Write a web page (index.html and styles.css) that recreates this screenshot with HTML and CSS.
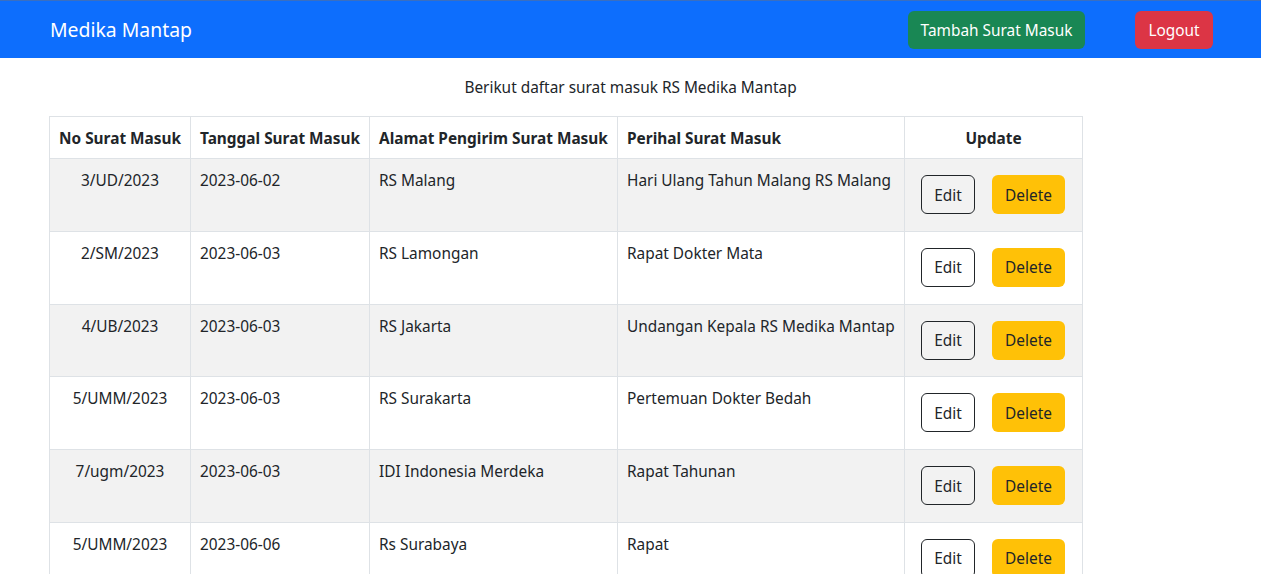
FILE: index.html
```html
<!DOCTYPE html>
<html lang="id">
<head>
<meta charset="utf-8">
<title>Surat Masuk</title>
<link rel="stylesheet" href="styles.css">
</head>
<body>
<nav class="navbar">
  <div class="brand">Medika Mantap</div>
  <div class="nav-actions">
    <button class="btn btn-success">Tambah Surat Masuk</button>
    <button class="btn btn-danger">Logout</button>
  </div>
</nav>
<main class="content">
  <p class="caption">Berikut daftar surat masuk RS Medika Mantap</p>
  <table class="table">
    <colgroup>
      <col class="c1"><col class="c2"><col class="c3"><col class="c4"><col class="c5">
    </colgroup>
    <thead>
      <tr>
        <th class="center">No Surat Masuk</th>
        <th>Tanggal Surat Masuk</th>
        <th>Alamat Pengirim Surat Masuk</th>
        <th>Perihal Surat Masuk</th>
        <th class="center">Update</th>
      </tr>
    </thead>
    <tbody>
      <tr class="odd">
        <td class="center">3/UD/2023</td><td>2023-06-02</td><td>RS Malang</td><td>Hari Ulang Tahun Malang RS Malang</td>
        <td class="actions"><button class="btn btn-edit">Edit</button><button class="btn btn-delete">Delete</button></td>
      </tr>
      <tr>
        <td class="center">2/SM/2023</td><td>2023-06-03</td><td>RS Lamongan</td><td>Rapat Dokter Mata</td>
        <td class="actions"><button class="btn btn-edit">Edit</button><button class="btn btn-delete">Delete</button></td>
      </tr>
      <tr class="odd">
        <td class="center">4/UB/2023</td><td>2023-06-03</td><td>RS Jakarta</td><td>Undangan Kepala RS Medika Mantap</td>
        <td class="actions"><button class="btn btn-edit">Edit</button><button class="btn btn-delete">Delete</button></td>
      </tr>
      <tr>
        <td class="center">5/UMM/2023</td><td>2023-06-03</td><td>RS Surakarta</td><td>Pertemuan Dokter Bedah</td>
        <td class="actions"><button class="btn btn-edit">Edit</button><button class="btn btn-delete">Delete</button></td>
      </tr>
      <tr class="odd">
        <td class="center">7/ugm/2023</td><td>2023-06-03</td><td>IDI Indonesia Merdeka</td><td>Rapat Tahunan</td>
        <td class="actions"><button class="btn btn-edit">Edit</button><button class="btn btn-delete">Delete</button></td>
      </tr>
      <tr>
        <td class="center">5/UMM/2023</td><td>2023-06-06</td><td>Rs Surabaya</td><td>Rapat</td>
        <td class="actions"><button class="btn btn-edit">Edit</button><button class="btn btn-delete">Delete</button></td>
      </tr>
    </tbody>
  </table>
</main>
</body>
</html>
```
FILE: styles.css
```css
* { box-sizing: border-box; }
body {
  margin: 0;
  font-family: "Noto Sans", "Open Sans", sans-serif;
  font-size: 15.4px;
  line-height: 24px;
  color: #212529;
  background: #fff;
}
.navbar {
  height: 58px;
  background: #0d6efd;
  border-top: 1px solid #3a6fc0;
  display: flex;
  align-items: center;
  justify-content: space-between;
  padding: 0 48px 0 50px;
}
.brand {
  color: #fff;
  font-size: 19.4px;
  line-height: 28px;
  margin-top: 1px;
}
.nav-actions {
  display: flex;
  gap: 50px;
}
.btn {
  font-family: inherit;
  font-size: 15.4px;
  line-height: 24px;
  height: 38px;
  border-radius: 6px;
  border: 1px solid transparent;
  padding: 7px 0 5px;
  text-align: center;
  cursor: pointer;
}
.btn-success { background: #198754; color: #fff; width: 177px; }
.btn-danger { background: #dc3545; color: #fff; width: 78px; }
.content { padding: 0 0 0 49px; }
.caption {
  margin: 18px 0 16px -49px;
  text-align: center;
  line-height: 24px;
}
.table {
  border-collapse: collapse;
  table-layout: fixed;
  width: 1033px;
}
.c1 { width: 141px; }
.c2 { width: 179px; }
.c3 { width: 248px; }
.c4 { width: 287px; }
.c5 { width: 178px; }
.table th, .table td {
  border: 1px solid #dee2e6;
  padding: 8px 9px;
  text-align: left;
  vertical-align: top;
  white-space: nowrap;
}
.table th {
  font-weight: 700;
  height: 42px;
  vertical-align: middle;
  padding-top: 10px;
  padding-bottom: 7px;
}
.table td {
  height: 72.8px;
  padding-top: 10px;
}
.table .center { text-align: center; }
.odd td { background: #f2f2f2; }
.table td.actions {
  padding: 16px 0 0 16px;
}
.btn-edit {
  background: transparent;
  border-color: #212529;
  color: #212529;
  width: 54px;
  height: 39px;
  margin-right: 17px;
}
.btn-delete {
  background: #ffc107;
  color: #212529;
  width: 73px;
  height: 39px;
}
```
